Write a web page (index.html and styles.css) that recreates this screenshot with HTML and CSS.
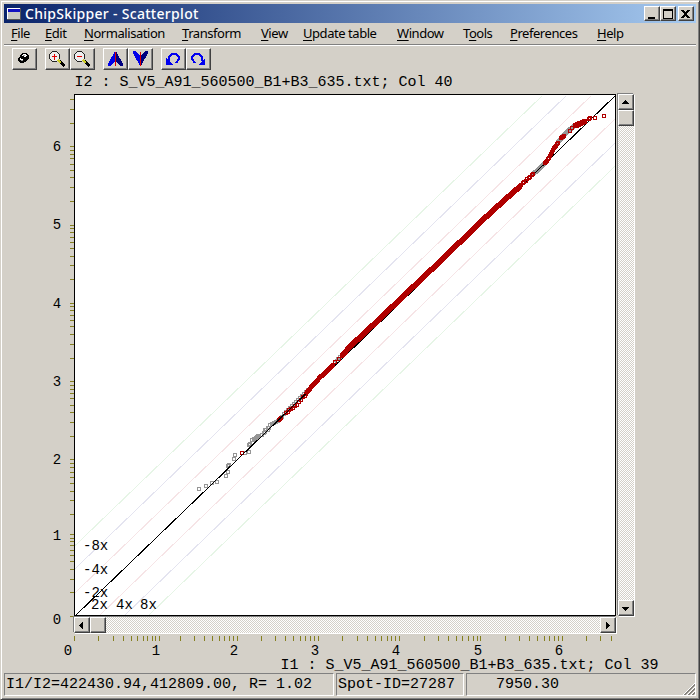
FILE: index.html
```
<!DOCTYPE html>
<html>
  <head>
    <title>ChipSkipper - Scatterplot</title>
    <meta charset="UTF-8">
    <link rel="stylesheet" href="styles.css">
  </head>
  <body>
    <div class="window">
      <div class="titlebar">
        <svg class="app-icon" width="14" height="12">
          <rect width="14" height="12" fill="#555"/>
          <rect width="13" height="11" fill="#fff"/>
          <rect x="1" y="1" width="12" height="10" fill="#c8c8c4"/>
          <rect x="1" y="1" width="12" height="3" fill="#1010c0"/>
        </svg>
        <span class="title">ChipSkipper - Scatterplot</span>
        <div class="win-buttons">
          <button><svg width="12" height="12"><path d="M2 9h7v2H2z"/></svg></button>
          <button><svg width="12" height="12"><path d="M1 1h10v10H1zM2 3v7h8V3z" fill-rule="evenodd"/></svg></button>
          <button class="close"><svg width="12" height="12"><path d="M1 2h3v1h1v1h1V3h1V2h3v1H9v1H8v1H7v2h1v1h1v1h1v1H7V9H6V8H5v1H4v1H1V9h1V8h1V7h1V5H3V4H2V3H1z"/></svg></button>
        </div>
      </div>

      <div class="menu">
        <span class="m-file"><u>F</u>ile</span>
        <span class="m-edit"><u>E</u>dit</span>
        <span class="m-norm"><u>N</u>ormalisation</span>
        <span class="m-trans"><u>T</u>ransform</span>
        <span class="m-view"><u>V</u>iew</span>
        <span class="m-update"><u>U</u>pdate table</span>
        <span class="m-window"><u>W</u>indow</span>
        <span class="m-tools">T<u>o</u>ols</span>
        <span class="m-pref"><u>P</u>references</span>
        <span class="m-help"><u>H</u>elp</span>
      </div>

      <div class="toolbar">
        <div class="group">
          <button>
            <svg width="23" height="20">
              <path d="M9 4h5v1h1v1h1v4h-1v1h-1v1h-1v1h-2v1H7v-1H6v-1H5V9h1V8h1V6h1V5h1z" fill="#000"/>
              <path d="M10 5h3v1h1v1h-1v1h-2V7H9V6h1zM7 9h1v1h2v1H7z" fill="#fff"/>
              <path d="M10 6h2v1h-2zM8 11h2v1H8z" fill="#999"/>
            </svg>
          </button>
        </div>
        <div class="group">
          <button>
            <svg width="23" height="20">
              <path d="M6 2h5v1h1v1h1v1h1v5h-1v1h-1v1h-1v1H6v-1H5v-1H4v-1H3V5h1V4h1V3h1z" fill="#222"/>
              <path d="M6 3h5v1h1v1h1v5h-1v1h-1v1H6v-1H5v-1H4V5h1V4h1z" fill="#eee"/>
              <path d="M8 5h1v2h2v1H9v3H8V8H6V7h2z" fill="#e00000"/>
              <path d="M12 12l2-1 5 5-1 2h-1z" fill="#000"/>
              <path d="M12 11l3 3" stroke="#cccc20" stroke-width="2"/>
            </svg>
          </button>
          <button>
            <svg width="23" height="20">
              <path d="M6 2h5v1h1v1h1v1h1v5h-1v1h-1v1h-1v1H6v-1H5v-1H4v-1H3V5h1V4h1V3h1z" fill="#222"/>
              <path d="M6 3h5v1h1v1h1v5h-1v1h-1v1H6v-1H5v-1H4V5h1V4h1z" fill="#eee"/>
              <path d="M6 7h5v1H6z" fill="#e00000"/>
              <path d="M12 12l2-1 5 5-1 2h-1z" fill="#000"/>
              <path d="M12 11l3 3" stroke="#cccc20" stroke-width="2"/>
            </svg>
          </button>
        </div>
        <div class="group">
          <button>
            <svg width="23" height="20">
              <path d="M11 2L4 15v2h2l5-4z" fill="#0000e8"/>
              <path d="M12 2l7 13v2h-2l-5-4z" fill="#000080"/>
              <path d="M11 3h1v14h-1z" fill="#e00000"/>
            </svg>
          </button>
          <button>
            <svg width="23" height="20">
              <path d="M11 17L4 4V2h2l5 4z" fill="#0000e8"/>
              <path d="M12 17l7-13V2h-2l-5 4z" fill="#000080"/>
              <path d="M11 3h1v14h-1z" fill="#e00000"/>
            </svg>
          </button>
        </div>
        <div class="group">
          <button>
            <svg width="23" height="20">
              <path d="M14 14l3-4V8l-3-3h-4L7 8v4" fill="none" stroke="#0000f0" stroke-width="2"/>
              <path d="M4 9v7h7z" fill="#0000f0"/>
            </svg>
          </button>
          <button>
            <svg width="23" height="20">
              <path d="M8 14l-3-4V8l3-3h4l3 3v4" fill="none" stroke="#0000f0" stroke-width="2"/>
              <path d="M18 9v7h-7z" fill="#0000f0"/>
            </svg>
          </button>
        </div>
      </div>

      <div class="chart">
        <div class="y-title">I2 : S_V5_A91_560500_B1+B3_635.txt; Col 40</div>
        <svg class="y-axis" id="yAxis" width="70" height="523"></svg>
        <svg class="plot" id="plot" width="542" height="522"></svg>
        <div class="scroll vertical">
          <button><svg width="13" height="13"><path d="M6 4h1v1h1v1h1v1h1v1H3V7h1V6h1V5h1z"/></svg></button>
          <button></button>
          <div class="track"></div>
          <button><svg width="13" height="13"><path d="M3 5h7v1H9v1H8v1H7v1H6V8H5V7H4V6H3z"/></svg></button>
        </div>
        <div class="scroll horizontal">
          <button><svg width="13" height="13"><path d="M8 3v7H7V9H6V8H5V7H4V6h1V5h1V4h1V3z"/></svg></button>
          <button></button>
          <div class="track"></div>
          <button><svg width="13" height="13"><path d="M5 3v7h1V9h1V8h1V7h1V6H8V5H7V4H6V3z"/></svg></button>
        </div>
        <svg class="x-axis" id="xAxis" width="542" height="23"></svg>
        <div class="x-title">I1 : S_V5_A91_560500_B1+B3_635.txt; Col 39</div>
      </div>

      <div class="status">
        <div class="ratio">I1/I2=422430.94,412809.00, R= 1.02</div>
        <div class="spot">Spot-ID=27287</div>
        <div class="value">
          <span>7950.30</span>
          <svg class="grip" width="13" height="13">
            <path d="M1 13L13 1M5 13l8-8M9 13l4-4" stroke="#fff"/>
            <path d="M2 13L13 2M3 13L13 3M6 13l7-7M7 13l6-6M10 13l3-3M11 13l2-2" stroke="#87847e"/>
          </svg>
        </div>
      </div>
    </div>
    <script src="plot.js"></script>
  </body>
</html>
```
FILE: styles.css
```
body {
    margin: 0;
    background-color: #d4d0c8;
    overflow: hidden;
}
svg {
    display: block;
    shape-rendering: crispEdges;
}
.window {
    box-sizing: border-box;
    width: 700px;
    height: 700px;
    padding: 2px;
    display: flex;
    flex-direction: column;
    background-color: #d4d0c8;
    border: 1px solid #d4d0c8;
    border-right-color: #404040;
    border-bottom-color: #404040;
    box-shadow: inset 1px 1px #fff, inset -1px -1px #808080;
    color: #000;
    font-family: "Liberation Mono", monospace;
    font-size: 15px;
}
.window > div {
    margin-left: 1px;
    margin-right: 1px;
    flex-shrink: 0;
}
button {
    box-sizing: border-box;
    padding: 0;
    background-color: #d4d0c8;
    border: 1px solid;
    border-color: #fff #404040 #404040 #fff;
    box-shadow: inset -1px -1px #808080;
    border-radius: 0;
}

.titlebar {
    display: flex;
    align-items: center;
    height: 19px;
    margin-top: 1px;
    background: linear-gradient(to right, #0a246a, #a6caf0);
}
.app-icon {
    margin-left: 3px;
}
.title {
    margin-left: 4px;
    color: #fff;
    font-family: "Noto Sans", sans-serif;
    font-size: 14px;
    font-weight: 500;
    letter-spacing: 0.3px;
    line-height: 18px;
    white-space: nowrap;
}
.win-buttons {
    display: flex;
    margin-left: auto;
    margin-right: 2px;
}
.win-buttons button {
    width: 16px;
    height: 15px;
    padding-left: 1px;
}
.win-buttons .close {
    margin-left: 2px;
}

.menu {
    display: flex;
    box-sizing: border-box;
    height: 23px;
    padding-left: 7px;
    border-bottom: 1px solid #fff;
    box-shadow: inset 0 -1px #808080;
    font-family: "Noto Sans", sans-serif;
    font-size: 13px;
    letter-spacing: -0.45px;
    line-height: 20px;
    white-space: nowrap;
}
.menu u {
    text-decoration-thickness: 1px;
    text-underline-offset: 2px;
    text-decoration-skip-ink: none;
}
.m-file { width: 34px; }
.m-edit { width: 39px; }
.m-norm { width: 98px; }
.m-trans { width: 79px; }
.m-view { width: 42px; }
.m-update { width: 94px; }
.m-window { width: 66px; }
.m-tools { width: 47px; }
.m-pref { width: 87px; }

.toolbar {
    display: flex;
    gap: 8px;
    padding: 2px 0 0 8px;
    height: 22px;
}
.group {
    display: flex;
}
.group button {
    width: 25px;
    height: 22px;
}

.chart {
    display: grid;
    grid-template-columns: 70px 542px 2px 16px;
    grid-template-rows: 24px 522px 1px 16px 3px 23px 14px;
    white-space: nowrap;
}
.y-title {
    grid-area: 1 / 2;
    padding-left: 0.5px;
    line-height: 26px;
}
.y-axis {
    grid-area: 2 / 1;
    overflow: visible;
}
.plot {
    grid-area: 2 / 2;
    background-color: #fff;
}
.scroll {
    display: flex;
    background-color: #d4d0c8;
}
.scroll button {
    width: 16px;
    height: 16px;
    flex-shrink: 0;
}
.track {
    flex: 1;
    background: repeating-conic-gradient(#d4d0c8 0 25%, #fff 0 50%) 0 0 / 2px 2px;
}
.vertical {
    grid-area: 2 / 4;
    flex-direction: column;
    box-shadow: -1px -1px #808080, 1px 1px #fff;
}
.horizontal {
    grid-area: 4 / 2;
    box-shadow: -1px -1px #808080, 1px 1px #fff;
}
.x-axis {
    grid-area: 6 / 2;
    overflow: visible;
}
.x-title {
    grid-area: 7 / 2;
    margin-left: 206.5px;
    line-height: 13px;
}
.axis-label {
    font-size: 14px;
    text-anchor: middle;
}
.fold-label {
    font-size: 14px;
}
.tick {
    fill: #858020;
}

.status {
    display: flex;
    gap: 2px;
}
.status > div {
    box-sizing: border-box;
    height: 23px;
    border: 1px solid;
    border-color: #808080 #fff #fff #808080;
    line-height: 22px;
    white-space: nowrap;
}
.status .ratio {
    width: 330px;
    padding-left: 1px;
}
.status .spot {
    width: 128px;
    padding-left: 1px;
}
.status .value {
    display: flex;
    justify-content: space-between;
    align-items: flex-start;
    flex: 1;
    padding-left: 29px;
}
.status .grip {
    align-self: flex-end;
}
```
FILE: plot.js
```
// the plot's top left corner on screen, all coordinates below are screen ones
const LEFT = 74;
const TOP = 94;

const DECADE_X = 81.2;
const DECADE_Y = 78.3;

// positions on a log axis: 1..10 in every decade, plus 11 after the first
function tickLogs() {
    const logs = [0];
    for (let d = 0; d < 7; d++) {
        for (let n = 2; n <= 10; n++) {
            logs.push(d + Math.log10(n));
        }
    }
    logs.push(Math.log10(11));
    return logs;
}

function drawAxes() {
    let xs = '';
    let ys = '';
    tickLogs().forEach(l => {
        const x = Math.round(l * DECADE_X * 1.001);
        const y = Math.round(616 - l * DECADE_Y) - TOP;
        if (x < 540) xs += `<rect class="tick" x="${x}" y="0" width="1" height="5"/>`;
        if (y > 3) ys += `<rect class="tick" x="66" y="${y}" width="4" height="1"/>`;
    });
    [68, 156, 234, 315, 396, 478, 559].forEach((x, i) => {
        xs += `<text class="axis-label" x="${x - LEFT}" y="19">${i}</text>`;
    });
    [619, 535, 459, 381, 303, 224, 146].forEach((y, i) => {
        ys += `<text class="axis-label" x="53" y="${y - TOP + 5}">${i}</text>`;
    });
    document.getElementById('xAxis').innerHTML = xs;
    document.getElementById('yAxis').innerHTML = ys;
}

function line(x1, y1, x2, y2, color) {
    return `<line x1="${x1}" y1="${y1}" x2="${x2}" y2="${y2}" stroke="${color}"/>`;
}

// 4px square with a 1px outline
function box(x, y, color) {
    return `<rect x="${Math.round(x) - 2}" y="${Math.round(y) - 2}" width="3" height="3" fill="none" stroke="${color}"/>`;
}

// boxes along a polyline, one every step pixels
function trail(points, step, color) {
    let out = '';
    for (let i = 0; i < points.length - 1; i++) {
        const [x1, y1] = points[i];
        const [x2, y2] = points[i + 1];
        const n = Math.max(1, Math.round((x2 - x1) / step));
        for (let k = 0; k <= n; k++) {
            out += box(x1 + (x2 - x1) * k / n, y1 + (y2 - y1) * k / n, color);
        }
    }
    return out;
}

function drawPlot() {
    const gray = '#969696';
    const red = '#b00000';
    let s = '';

    // 2x, 4x and 8x fold lines
    [[24, '#f6e4e6'], [49, '#e4e4f0'], [73, '#e6f5e6']].forEach(([d, color]) => {
        s += line(75 + d, 615, 615 + d, 95, color);
        s += line(75 - d, 615, 615 - d, 95, color);
    });

    // spots
    [[199, 489], [206, 486], [212, 483], [217, 482], [226, 476], [228, 472], [228, 466],
     [229, 465], [234, 459], [235, 455], [245, 453], [249, 452], [249, 445], [250, 444],
     [252, 440], [254, 440], [257, 437], [258, 436], [262, 435], [265, 432], [265, 430],
     [268, 430], [269, 428]].forEach(p => { s += box(p[0], p[1], gray); });
    s += trail([[254, 439], [259, 436]], 2, gray);
    s += trail([[264, 433], [270, 425], [278, 421], [286, 412], [300, 398], [308, 390]], 2, gray);
    s += trail([[333, 365], [340, 357]], 2, gray);
    s += trail([[533, 174], [538, 170], [545, 163]], 1, gray);
    s += trail([[558, 142], [567, 132], [574, 126]], 1, gray);
    s += box(242, 453, red);
    s += trail([[279, 420], [281, 418]], 1, red);
    s += trail([[286, 413], [291, 409], [297, 405], [303, 397], [306, 394]], 2, red);

    s += line(75, 615, 615, 95, '#000');

    s += trail([[307, 392], [313, 385], [317, 381], [320, 377], [324, 374], [333, 365]], 1, red);
    s += trail([[335, 362], [342, 356]], 3, red);
    const dense = [[342, 355], [350, 346], [380, 318], [405, 294], [440, 261], [480, 222],
                   [505, 199], [520, 186]];
    s += trail(dense, 1, red);
    s += trail(dense.map(([x, y]) => [x, y + 1]), 1, red);
    s += trail([[520, 186], [533, 174]], 1.5, red);
    s += trail([[545, 163], [549, 158], [552, 152], [554, 148], [558, 143]], 1, red);
    s += trail([[561, 138], [564, 136]], 1, red);
    s += trail([[570, 131], [572, 128]], 2, red);
    s += trail([[575, 125], [580, 123], [585, 121]], 1, red);
    s += trail([[576, 126], [585, 122]], 1, red);
    [[589, 119], [590, 118], [595, 118], [604, 116]].forEach(p => { s += box(p[0], p[1], red); });

    // fold labels
    [['-8x', 83, 549], ['-4x', 83, 573], ['-2x', 83, 596],
     ['2x', 91, 608], ['4x', 116, 608], ['8x', 140, 608]].forEach(([t, x, y]) => {
        s += `<text class="fold-label" x="${x - 0.5}" y="${y}">${t}</text>`;
    });

    document.getElementById('plot').innerHTML =
        `<g transform="translate(${0.5 - LEFT} ${0.5 - TOP})">${s}</g>` +
        '<rect x="0.5" y="0.5" width="541" height="521" fill="none" stroke="#000"/>';
}

drawAxes();
drawPlot();
```
